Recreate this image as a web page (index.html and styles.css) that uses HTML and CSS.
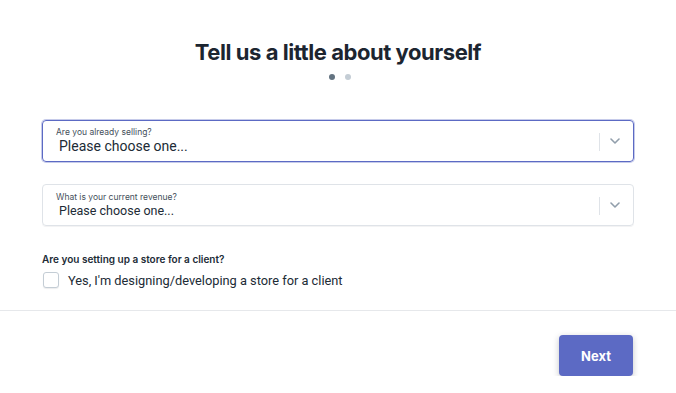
FILE: index.html
```html
<!DOCTYPE html>
<html lang="en">
  <head>
    <meta charset="UTF-8" />
    <meta name="viewport" content="width=device-width, initial-scale=1.0" />
    <title>Tell us about yourself</title>
    <link rel="stylesheet" href="styles.css">
  </head>
  <body>
    <div class="page">
      <div class="form">
        <h1 class="title">Tell us a little about yourself</h1>
        <div class="steps">
          <span class="dot active"></span>
          <span class="dot"></span>
        </div>

        <div class="select focused">
          <div class="select-text">
            <span class="select-label">Are you already selling?</span>
            <span class="select-value">Please choose one...</span>
          </div>
          <span class="select-sep"></span>
          <svg class="chevron" width="10" height="6" viewBox="0 0 10 6"><path d="M1 1l4 4 4-4" fill="none" stroke="#919eab" stroke-width="1.6" stroke-linecap="round" stroke-linejoin="round"/></svg>
        </div>

        <div class="select small">
          <div class="select-text">
            <span class="select-label">What is your current revenue?</span>
            <span class="select-value">Please choose one...</span>
          </div>
          <span class="select-sep"></span>
          <svg class="chevron" width="10" height="6" viewBox="0 0 10 6"><path d="M1 1l4 4 4-4" fill="none" stroke="#919eab" stroke-width="1.6" stroke-linecap="round" stroke-linejoin="round"/></svg>
        </div>

        <div class="question">Are you setting up a store for a client?</div>
        <label class="check">
          <span class="box"></span>
          <span>Yes, I'm designing/developing a store for a client</span>
        </label>
      </div>

      <div class="footer">
        <button class="next">Next</button>
      </div>
    </div>
  </body>
</html>
```

FILE: styles.css
```css
* {
  box-sizing: border-box;
}

body {
  margin: 0;
  background: #fff;
  font-family: "Roboto", "Liberation Sans", Arial, sans-serif;
  color: #212b36;
}

.form {
  width: 592px;
  margin-left: 42px;
  padding-top: 38px;
}

.title {
  margin: 0;
  text-align: center;
  font-family: "Inter", "Noto Sans", sans-serif;
  font-size: 22px;
  font-weight: 700;
  letter-spacing: -0.45px;
  line-height: 28px;
  color: #1c2530;
}

.steps {
  display: flex;
  justify-content: center;
  gap: 10px;
  margin-top: 8px;
  padding-left: 4px;
}

.dot {
  width: 6px;
  height: 6px;
  border-radius: 50%;
  background: #c4cdd5;
}

.dot.active {
  background: #637381;
}

.select {
  display: flex;
  align-items: center;
  height: 42px;
  margin-top: 40px;
  padding: 0 12px 0 14px;
  border: 1px solid #dfe3e8;
  border-radius: 4px;
  box-shadow: 0 1px 0 rgba(22, 29, 37, 0.05);
}

.select.focused {
  border-color: #5c6ac4;
  box-shadow: 0 0 0 1px rgba(92, 106, 196, 0.35);
}

.select.small {
  margin-top: 22px;
}

.select-text {
  flex: 1;
  display: flex;
  flex-direction: column;
}

.select-label {
  font-family: "Inter", "Noto Sans", sans-serif;
  font-size: 8.5px;
  line-height: 11px;
  color: #454f5b;
  margin-left: -1px;
}

.select-value {
  font-size: 14px;
  line-height: 17px;
  color: #212b36;
  margin-left: 2px;
}

.select.small .select-value {
  font-size: 12.5px;
  line-height: 15px;
}

.select-sep {
  width: 1px;
  height: 18px;
  background: #dfe3e8;
  margin-right: 10px;
  margin-top: 2px;
}

.chevron {
  margin-right: 1px;
}

.question {
  margin-top: 27px;
  font-family: "Inter", "Noto Sans", sans-serif;
  font-size: 10px;
  font-weight: 600;
  color: #212b36;
}

.check {
  display: flex;
  align-items: center;
  gap: 9px;
  margin-top: 7px;
  font-size: 12.8px;
  color: #212b36;
}

.box {
  width: 16px;
  height: 16px;
  margin-left: 1px;
  border: 1px solid #c4cdd5;
  border-radius: 3px;
  background: #fff;
  box-shadow: 0 1px 1px rgba(22, 29, 37, 0.08);
}

.footer {
  margin-top: 22px;
  border-top: 1px solid #e6e8eb;
  display: flex;
  justify-content: flex-end;
  padding: 24px 43px 0 0;
}

.next {
  width: 74px;
  height: 41px;
  border: none;
  border-radius: 4px;
  background: #5c6ac4;
  color: #fff;
  font-family: "Inter", "Noto Sans", sans-serif;
  font-size: 13px;
  font-weight: 700;
  box-shadow: 0 2px 6px rgba(22, 29, 37, 0.25);
  cursor: pointer;
}
```
